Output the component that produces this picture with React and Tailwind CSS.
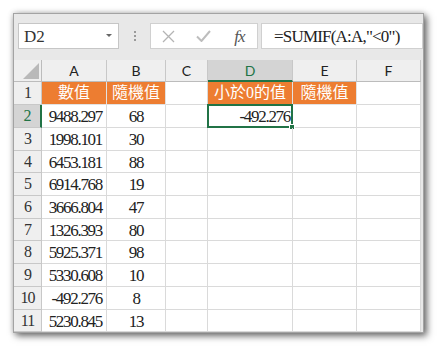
import React from "react";

const serif = { fontFamily: '"Liberation Serif", "Noto Sans CJK TC", serif' };

const rows = [
  ["9488.297", "68"],
  ["1998.101", "30"],
  ["6453.181", "88"],
  ["6914.768", "19"],
  ["3666.804", "47"],
  ["1326.393", "80"],
  ["5925.371", "98"],
  ["5330.608", "10"],
  ["-492.276", "8"],
  ["5230.845", "13"],
];

const heights = ["h-[23px]", "h-[23px]", "h-[22px]", "h-[23px]", "h-[23px]", "h-[22px]", "h-[23px]", "h-[23px]", "h-[23px]", "h-[22px]"];

function ColHeader({ label, w, sel }) {
  return (
    <div
      className={`${w} h-full flex items-center justify-center border-r border-[#c8c8c8] text-[14px] font-['Lato',sans-serif] ${
        sel ? "bg-[#d4d4d4] text-[#217346] border-b-2 border-b-[#217346]" : "bg-[#efefef] text-[#222] border-b border-b-[#bcbcbc]"
      }`}
    >
      {label}
    </div>
  );
}

export default function App() {
  return (
    <div className="w-[437px] h-[346px] bg-white pt-[13px] pl-[13px]">
      <div className="w-[411px] h-[320px] bg-[#e8e8e8] border border-[#a3a3a3] shadow-[3px_3px_7px_rgba(0,0,0,0.55),0_0_6px_rgba(0,0,0,0.2)] flex flex-col">
        {/* toolbar */}
        <div className="h-[46px] flex items-start pt-[9px] pl-[4px] shrink-0">
          <div className="w-[101px] h-[26px] bg-white border border-[#c6c6c6] flex items-center justify-between pl-[5px] pr-[6px]">
            <span className="text-[17px] text-[#333] leading-none" style={serif}>D2</span>
            <svg width="6" height="4" viewBox="0 0 6 4"><path d="M0 0h6L3 3z" fill="#666" /></svg>
          </div>
          <div className="w-[31px] h-[26px] flex flex-col items-center justify-center gap-[2px]">
            <div className="w-[2px] h-[2px] bg-[#9a9a9a]" />
            <div className="w-[2px] h-[2px] bg-[#9a9a9a]" />
            <div className="w-[2px] h-[2px] bg-[#9a9a9a]" />
          </div>
          <div className="w-[108px] h-[26px] bg-white border border-[#d0d0d0] flex items-center">
            <div className="w-[36px] flex justify-center">
              <svg width="13" height="13" viewBox="0 0 13 13"><path d="M1 1l11 11M12 1L1 12" stroke="#b4b4b4" strokeWidth="1.3" /></svg>
            </div>
            <div className="w-[36px] flex justify-center">
              <svg width="15" height="12" viewBox="0 0 15 12"><path d="M1 6.5l4.5 4.5L14 1" stroke="#bdbdbd" strokeWidth="2" fill="none" /></svg>
            </div>
            <div className="w-[36px] flex justify-center">
              <span className="italic text-[17px] text-[#555] leading-none tracking-[-1px]" style={serif}>fx</span>
            </div>
          </div>
          <div className="ml-[3px] w-[162px] h-[26px] bg-white border border-[#d0d0d0] flex items-center pl-[12px]">
            <span className="text-[17px] text-[#222] leading-none tracking-[-0.8px]" style={serif}>=SUMIF(A:A,"&lt;0")</span>
          </div>
        </div>
        {/* grid */}
        <div className="w-[407px] flex flex-col bg-white">
          <div className="h-[22px] flex">
            <div className="w-[28px] h-full bg-[#efefef] border-r border-b border-[#bcbcbc] relative overflow-hidden">
              <svg className="absolute right-[2px] bottom-[2px]" width="16" height="16" viewBox="0 0 16 16"><path d="M16 0V16H0z" fill="#b9b9b9" /></svg>
            </div>
            <ColHeader label="A" w="w-[65px]" />
            <ColHeader label="B" w="w-[59px]" />
            <ColHeader label="C" w="w-[42px]" />
            <ColHeader label="D" w="w-[85px]" sel />
            <ColHeader label="E" w="w-[64px]" />
            <ColHeader label="F" w="w-[64px]" />
          </div>
          {/* row 1 */}
          <div className="h-[23px] flex">
            <div className="w-[28px] h-full bg-[#efefef] border-r border-b border-[#c8c8c8] flex items-center justify-center text-[16px] text-[#333] tracking-[-1px]" style={serif}>1</div>
            <div className="w-[65px] h-full bg-[#ed7d31] border-r border-b border-[#e2e2e2] flex items-center justify-center text-white text-[16px]" style={serif}>數值</div>
            <div className="w-[59px] h-full bg-[#ed7d31] border-r border-b border-[#e2e2e2] flex items-center justify-center text-white text-[16px]" style={serif}>隨機值</div>
            <div className="w-[42px] h-full border-r border-b border-[#dadada]" />
            <div className="w-[85px] h-full bg-[#ed7d31] border-r border-b border-[#e2e2e2] flex items-center justify-center text-white text-[16px]" style={serif}>小於0的值</div>
            <div className="w-[64px] h-full bg-[#ed7d31] border-r border-b border-[#e2e2e2] flex items-center justify-center text-white text-[16px]" style={serif}>隨機值</div>
            <div className="w-[64px] h-full border-r border-b border-[#dadada]" />
          </div>
          {rows.map((r, i) => {
            const sel = i === 0;
            return (
              <div key={i} className={`${heights[i]} flex`}>
                <div
                  className={`w-[28px] h-full border-b border-[#c8c8c8] flex items-center justify-center text-[16px] tracking-[-1px] ${
                    sel ? "bg-[#d4d4d4] text-[#217346] border-r-2 border-r-[#217346]" : "bg-[#efefef] text-[#333] border-r"
                  }`}
                  style={serif}
                >
                  {i + 2}
                </div>
                <div className="w-[65px] h-full border-r border-b border-[#dadada] flex items-center justify-end pr-[4px] pt-[2px] text-[17px] text-[#222] tracking-[-1.3px]" style={serif}>{r[0]}</div>
                <div className="w-[59px] h-full border-r border-b border-[#dadada] flex items-center justify-center pt-[2px] text-[17px] text-[#222] tracking-[-1.3px]" style={serif}>{r[1]}</div>
                <div className="w-[42px] h-full border-r border-b border-[#dadada]" />
                <div className="w-[85px] h-full border-r border-b border-[#dadada] relative flex items-center justify-end pr-[2px] pt-[2px] text-[17px] text-[#222] tracking-[-1.3px]" style={serif}>
                  {sel ? "-492.276" : ""}
                  {sel && (
                    <div className="absolute -left-[1px] -top-[1px] -right-[1px] -bottom-[1px] border-2 border-[#217346]">
                      <div className="absolute -right-[4px] -bottom-[4px] w-[6px] h-[6px] bg-[#217346] border border-white" />
                    </div>
                  )}
                </div>
                <div className="w-[64px] h-full border-r border-b border-[#dadada]" />
                <div className="w-[64px] h-full border-r border-b border-[#dadada]" />
              </div>
            );
          })}
        </div>
      </div>
    </div>
  );
}
